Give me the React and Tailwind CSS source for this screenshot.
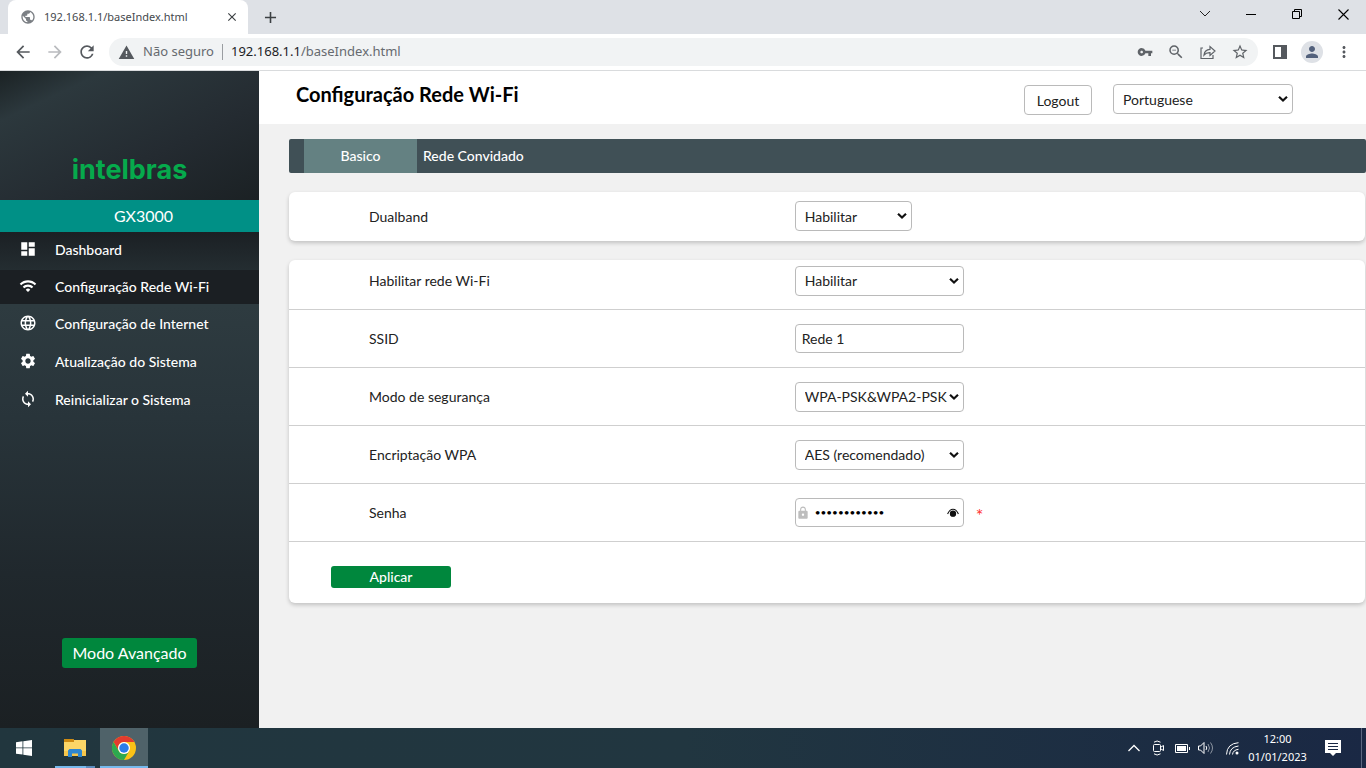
import React from "react";
import { MdDashboard, MdWifi, MdLanguage, MdSettings, MdLoop, MdLock, MdPublic, MdVpnKey, MdWarning, MdPerson, MdArrowBack, MdArrowForward, MdRefresh, MdClose, MdAdd, MdStarBorder, MdZoomOut, MdMoreVert } from "react-icons/md";

const menu = [
  { label: "Dashboard", Icon: MdDashboard, cls: "h-[38px] pb-1 bg-linear-to-b from-[#1b2024] to-[#242d31]" },
  { label: "Configuração Rede Wi-Fi", Icon: MdWifi, cls: "h-[34px] pb-0.5 bg-[#1b1f23]" },
  { label: "Configuração de Internet", Icon: MdLanguage, cls: "h-[38px]" },
  { label: "Atualização do Sistema", Icon: MdSettings, cls: "h-[38px]" },
  { label: "Reinicializar o Sistema", Icon: MdLoop, cls: "h-[38px]" },
];

function Chevron() {
  return (
    <svg viewBox="0 0 10 7" className="pointer-events-none absolute right-[5px] top-1/2 h-[7px] w-[10px] -translate-y-1/2" fill="none" stroke="#111" strokeWidth="2.2">
      <path d="M1 1.2 5 5l4-3.8" />
    </svg>
  );
}

function Select({ id, value, className, label }) {
  return (
    <div className={"relative " + className}>
      <select id={id} aria-label={label} defaultValue={value} className="h-[30px] w-full appearance-none rounded-[4px] border border-[#bababa] bg-white pl-[9px] text-[14px] text-[#222]">
        <option>{value}</option>
      </select>
      <Chevron />
    </div>
  );
}

function Row({ id, label, children }) {
  return (
    <div className="flex h-[58px] items-center border-b border-[#cfcfcf]">
      <label htmlFor={id} className="w-[47%] pl-20 text-[14px] text-[#222]">{label}</label>
      <div className="flex items-center">{children}</div>
    </div>
  );
}

function TitleBar() {
  return (
    <div className="flex h-[34px] items-end bg-[#dee1e6]">
      <div className="ml-2 flex h-[34px] w-60 items-center rounded-t-lg bg-white pl-3 pr-[7px]">
        <MdPublic className="size-4 text-[#7b7f84]" />
        <span className="ml-2 flex-1 text-[11px] text-[#45494d]">192.168.1.1/baseIndex.html</span>
        <button aria-label="Fechar guia" className="p-0.5"><MdClose className="size-3.5 text-[#3c4043]" /></button>
      </div>
      <button aria-label="Nova guia" className="flex h-[34px] w-11 items-center justify-center"><MdAdd className="size-[19px] text-[#3c4043]" /></button>
      <div className="ml-auto flex h-[34px] items-center pb-1.5">
        <button aria-label="Pesquisar guias" className="flex w-[46px] justify-center">
          <svg width="12" height="8" fill="none" stroke="#222"><path d="m1 1 5 5 5-5" /></svg>
        </button>
        <button aria-label="Minimizar" className="flex w-[46px] justify-center">
          <svg width="10" height="10" stroke="#000"><path d="M0 5.5h10" /></svg>
        </button>
        <button aria-label="Restaurar" className="flex w-[46px] justify-center">
          <svg width="11" height="11" fill="none" stroke="#000"><path d="M.5 2.5h7v7h-7zM2.5 2.5v-2h7v7h-2" /></svg>
        </button>
        <button aria-label="Fechar" className="flex w-[46px] justify-center">
          <svg width="11" height="11" fill="none" stroke="#000" strokeWidth="1.1"><path d="m.5.5 10 10m0-10-10 10" /></svg>
        </button>
      </div>
    </div>
  );
}

function Toolbar() {
  return (
    <div className="flex h-[37px] items-center border-b border-[#d9dbdd] bg-white px-[13px]">
      <button aria-label="Voltar"><MdArrowBack className="size-5 text-[#55595e]" /></button>
      <button aria-label="Avançar" className="ml-3"><MdArrowForward className="size-5 text-[#b9bbbe]" /></button>
      <button aria-label="Recarregar" className="ml-3"><MdRefresh className="size-5 text-[#55595e]" /></button>
      <div className="ml-3 flex h-7 flex-1 items-center rounded-full bg-[#f1f3f4] px-[9px] text-[13px] text-[#666a6f]">
        <MdWarning className="size-[17px] text-[#55595e]" />
        <span className="ml-2">Não seguro</span>
        <span className="mx-2 h-4 w-px bg-[#9a9da1]" />
        <span className="flex-1"><span className="text-[#202124]">192.168.1.1</span>/baseIndex.html</span>
        <div className="flex items-center gap-3.5 text-[#5f6368]">
          <MdVpnKey className="size-4" />
          <MdZoomOut className="size-[18px]" />
          <svg width="18" height="18" viewBox="-1 -1 18 18" fill="none" stroke="currentColor" strokeWidth="1.2">
            <path d="M3 4H1v10.500h12V11M4 11c.4-3.500 2.500-5.400 6-5.600V2.500L15 7l-5 4.500V8.700C7.500 8.600 5.500 9.200 4 11Z" />
          </svg>
          <MdStarBorder className="size-[18px]" />
        </div>
      </div>
      <svg className="ml-[15px]" width="14" height="14" fill="none" stroke="#55595e" strokeWidth="2"><path d="M1 1h12v12H1z" /><path d="M9 1h4v12H9z" fill="#55595e" /></svg>
      <button aria-label="Perfil" className="ml-3.5 flex size-[22px] items-center justify-center rounded-full bg-[#dee1e6]"><MdPerson className="size-[18px] text-[#53617c]" /></button>
      <button aria-label="Menu" className="ml-3"><MdMoreVert className="size-[18px] text-[#55595e]" /></button>
    </div>
  );
}

function Sidebar() {
  return (
    <aside className="flex w-[259px] shrink-0 flex-col bg-[#1b2023] text-white">
      <div className="flex h-[129px] items-end justify-center bg-linear-[155deg,#1b2224_0%,#2c383d_20%,#242b31_62%,#1b2124_100%] pb-3">
        <span className="font-['Inter',sans-serif] text-[27px] leading-9 font-bold text-[#06aa4c]">intelbras</span>
      </div>
      <div className="flex h-8 items-center justify-center bg-[#009086] pl-7 text-[16px]">GX3000</div>
      <nav className="bg-linear-to-b from-[#2e3b40] from-40% to-[#28343a]">
        {menu.map(({ label, Icon, cls }) => (
          <a key={label} href="#" className={"flex items-center gap-[18px] pl-[19px] text-[14px] font-medium " + cls}>
            <Icon className="size-[18px]" />
            {label}
          </a>
        ))}
      </nav>
      <div className="flex flex-1 items-end justify-center bg-linear-to-b from-[#28343a] via-[#20282d] to-[#1b2023] pb-[60px]">
        <button className="h-[30px] w-[135px] rounded-[3px] bg-[#00873d] text-[16px]">Modo Avançado</button>
      </div>
    </aside>
  );
}

function Main() {
  return (
    <main className="min-w-0 flex-1 bg-[#f1f1f1]">
      <header className="flex h-[53px] items-start bg-white pl-[37px] pr-[73px]">
        <h1 className="flex-1 pt-[7px] text-[20px] leading-8 font-bold text-black">Configuração Rede Wi-Fi</h1>
        <button className="mt-3.5 h-[30px] w-[68px] rounded-[4px] border border-[#bababa] text-[14px] text-[#222]">Logout</button>
        <Select id="idioma" label="Idioma" value="Portuguese" className="ml-[21px] mt-[13px] w-[180px]" />
      </header>
      <div className="pl-[30px] pt-[15px]">
        <div className="flex h-[34px] rounded-[2px] bg-[#405056] pl-[15px] text-[14px] font-medium text-white">
          <button className="w-[113px] bg-[#648182] pb-0.5">Basico</button>
          <button className="px-1.5 pb-0.5">Rede Convidado</button>
        </div>
        <section className="mr-px mt-[19px] flex h-[49px] items-center rounded-[6px] bg-white pb-px shadow-[0_2px_4px_rgba(0,0,0,0.2)]">
          <label htmlFor="dualband" className="w-[47%] pl-20 text-[14px] text-[#222]">Dualband</label>
          <Select id="dualband" value="Habilitar" className="w-[117px]" />
        </section>
        <section className="mr-px mt-[19px] rounded-[6px] bg-white shadow-[0_2px_4px_rgba(0,0,0,0.2)]">
          <div className="flex h-[50px] items-center border-b border-[#cfcfcf] pb-2">
            <label htmlFor="wifi" className="w-[47%] pl-20 text-[14px] text-[#222]">Habilitar rede Wi-Fi</label>
            <Select id="wifi" value="Habilitar" className="w-[169px]" />
          </div>
          <Row id="ssid" label="SSID">
            <input id="ssid" defaultValue="Rede 1" className="h-[29px] w-[169px] rounded-[4px] border border-[#bababa] px-1.5 text-[14px] text-[#222]" />
          </Row>
          <Row id="seguranca" label="Modo de segurança">
            <Select id="seguranca" value="WPA-PSK&WPA2-PSK" className="w-[169px]" />
          </Row>
          <Row id="wpa" label="Encriptação WPA">
            <Select id="wpa" value="AES (recomendado)" className="w-[169px]" />
          </Row>
          <Row id="senha" label="Senha">
            <div className="flex h-[29px] w-[169px] items-center rounded-[4px] border border-[#bababa]">
              <MdLock className="size-3.5 shrink-0 text-[#bdbdbd]" />
              <input id="senha" type="password" defaultValue="abcdefghijkl" className="ml-[5px] w-0 flex-1 text-[10px] text-black" />
              <button aria-label="Mostrar senha" className="mr-1">
                <svg width="12" height="9" viewBox="0 0 12 9" fill="none" stroke="#111" strokeWidth="1.1"><path d="M.6 6C2 2.700 4 1.200 6 1.200s4 1.500 5.400 4.800" /><circle cx="6" cy="5.700" r="2.600" fill="#111" /></svg>
              </button>
            </div>
            <span className="ml-3 pt-1 text-[18px] leading-5 text-[#f33]">*</span>
          </Row>
          <div className="flex h-[61px] items-center pl-[42px] pt-2">
            <button className="h-[22px] w-[120px] rounded-[3px] bg-[#00873d] text-[14px] font-medium text-white">Aplicar</button>
          </div>
        </section>
      </div>
    </main>
  );
}

function Taskbar() {
  return (
    <footer className="flex h-10 items-stretch bg-linear-to-r from-[#21363e] via-[#213640] to-[#1a2844] text-white">
      <button aria-label="Iniciar" className="flex w-12 items-center justify-center">
        <svg width="16" height="16" viewBox="0 0 16 16" fill="#fff"><path d="M0 2.200 6.500 1.300V7.500H0zM7.300 1.200 16 0v7.500H7.300zM0 8.300h6.500v6.300L0 13.700zM7.300 8.300H16V16l-8.700-1.200z" /></svg>
      </button>
      <button aria-label="Explorador de Arquivos" className="relative ml-[7px] flex w-10 items-center justify-center">
        <svg width="22" height="18" viewBox="0 0 22 18"><path d="M0 0h9l1 1h12v16H0z" fill="#fcd667" /><path d="M0 0h9l1 1v2H0z" fill="#cf8b12" /><path d="M0 12h22v5H0z" fill="#f6c64b" /><path d="M4 18v-6.500L5.500 10h11l1.500 1.500V18h-4v-3.500H8V18z" fill="#2f87cf" /></svg>
        <span className="absolute bottom-0 left-0 flex h-0.5 w-10 bg-[#76b9ed]"><span className="ml-auto w-[9px] bg-[#5b8cbd]" /></span>
      </button>
      <button aria-label="Chrome" className="ml-[5px] flex w-12 items-center justify-center border-b-2 border-[#76b9ed] bg-[#4f6269] pt-0.5">
        <svg width="24" height="24" viewBox="0 0 48 48">
          <circle cx="24" cy="24" r="24" fill="#fbc116" />
          <path d="M3.200 12A24 24 0 0 1 44.800 12H24a12 12 0 0 0-10.400 18z" fill="#e33b2e" />
          <path d="M3.200 12A24 24 0 0 0 24 48l10.400-18A12 12 0 0 1 13.600 30z" fill="#2da94f" />
          <circle cx="24" cy="24" r="12" fill="#fff" /><circle cx="24" cy="24" r="9.500" fill="#2a7de9" />
        </svg>
      </button>
      <div className="ml-auto flex items-center">
        <svg width="12" height="8" fill="none" stroke="#fff" strokeWidth="1.300"><path d="m.5 7 5.500-5.500L11.500 7" /></svg>
        <svg className="ml-3" width="13" height="16" viewBox="0 0 13 16" fill="none" stroke="#fff"><rect x="1.500" y="4.500" width="7" height="7" rx="1" /><path d="M9 7l2.500-1.500v5L9 9M2 2.200Q5-.2 8.500 2.200M2 13.800q3 2.400 6.500 0" /></svg>
        <svg className="ml-2.5" width="15" height="9" fill="none" stroke="#fff"><path d="M.5.5h12v8H.5zM14.500 3v3" /><path d="M2 2h9v5H2z" fill="#fff" stroke="none" /></svg>
        <svg className="ml-2" width="16" height="14" fill="none" stroke="#fff"><path d="M.5 5h2l3.500-3.500v11L2.500 9h-2z" /><path d="M8 5q1.500 2 0 4" /><path d="M10 3q3 4 0 8M12.500 1.500q4 5.500 0 11" opacity=".5" /></svg>
        <svg className="ml-3" width="13" height="13" fill="none" stroke="#fff"><path d="M.5 12.500Q1 1.500 12.500.7M3.500 12.500Q4 5 12.500 4M6.500 12.500Q7 8 12.500 7.300" /><circle cx="11" cy="11" r="1.500" fill="#fff" stroke="none" /></svg>
        <div className="ml-2 w-[61px] text-center text-[11px] leading-[18px]">12:00<br />01/01/2023</div>
        <svg className="ml-[17px]" width="16" height="16" viewBox="0 0 16 16"><path d="M0 0h16v13h-5l-3 3-3-3H0z" fill="#fff" /><path d="M3 3.500h10M3 6.500h10M3 9.500h10" stroke="#1a2844" /></svg>
        <span className="ml-5 mr-1 h-10 w-px bg-[#5b6780]" />
      </div>
    </footer>
  );
}

export default function App() {
  return (
    <div className="flex min-h-screen flex-col font-['Noto_Sans',sans-serif]">
      <TitleBar />
      <Toolbar />
      <div className="flex flex-1 font-['Lato',sans-serif]">
        <Sidebar />
        <Main />
      </div>
      <Taskbar />
    </div>
  );
}
